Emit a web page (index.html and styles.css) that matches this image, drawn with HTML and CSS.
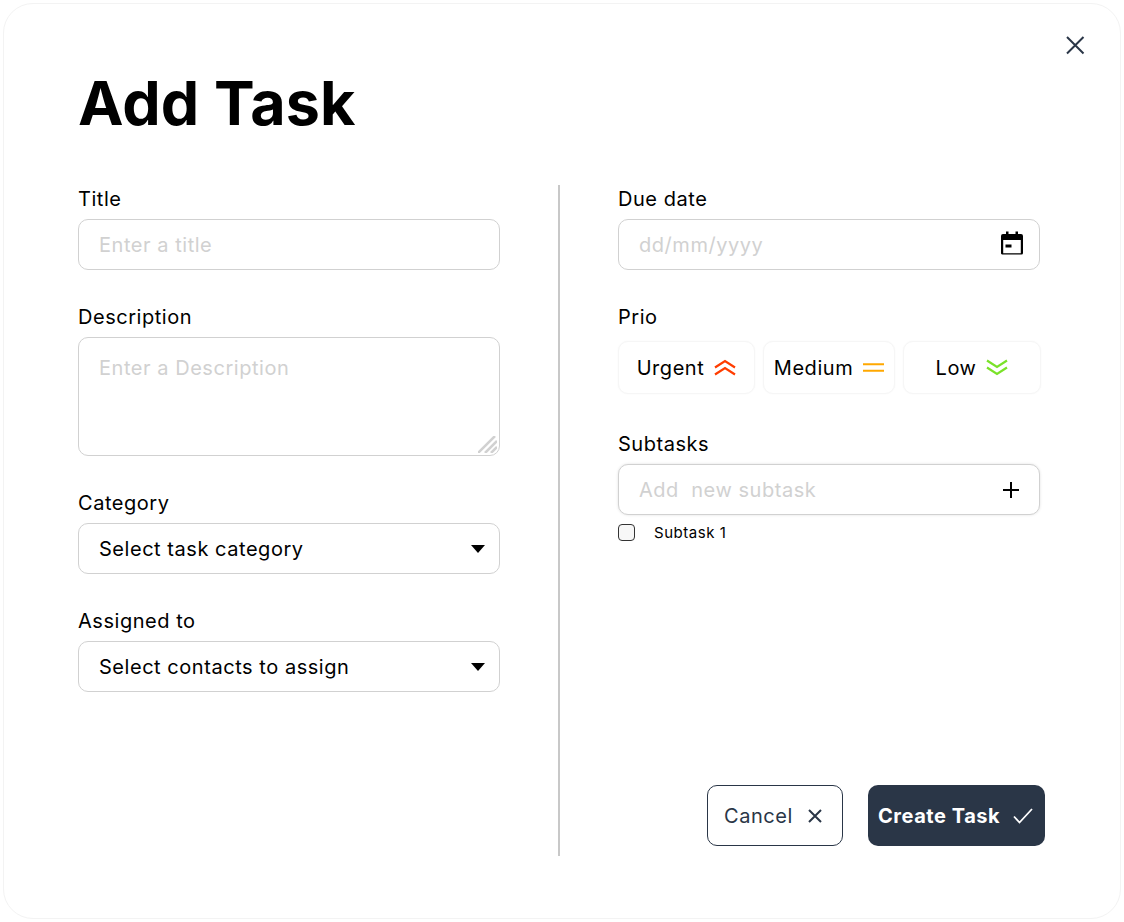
FILE: index.html
```html
<!DOCTYPE html>
<html lang="en">
<head>
    <meta charset="UTF-8">
    <meta name="viewport" content="width=device-width, initial-scale=1.0">
    <title>Add Task</title>
    <link rel="stylesheet" href="styles.css">
</head>
<body>
    <div class="modal">
        <button type="button" class="fechar" aria-label="Close">
            <svg width="24" height="24" viewBox="0 0 24 24"><path d="M4 4 L20.500 20.500 M20.500 4 L4 20.500" fill="none" stroke="#2a3647" stroke-width="2"/></svg>
        </button>

        <h1>Add Task</h1>

        <form class="form-task">
            <div class="coluna">
                <div class="campo">
                    <label for="title">Title</label>
                    <input type="text" id="title" placeholder="Enter a title">
                </div>
                <div class="campo">
                    <label for="description">Description</label>
                    <div class="caixa-texto">
                        <textarea id="description" placeholder="Enter a Description"></textarea>
                        <svg class="grip" width="19" height="17" viewBox="0 0 19 17"><path d="M0 17 L17 0 M7 17 L19 5 M13 17 L19 11" fill="none" stroke="#d1d1d1" stroke-width="2.500"/></svg>
                    </div>
                </div>
                <div class="campo">
                    <label for="category">Category</label>
                    <select id="category"><option>Select task category</option></select>
                </div>
                <div class="campo">
                    <label for="assigned">Assigned to</label>
                    <select id="assigned"><option>Select contacts to assign</option></select>
                </div>
            </div>

            <div class="divisor"></div>

            <div class="coluna">
                <div class="campo">
                    <label for="due">Due date</label>
                    <div class="com-icone">
                        <input type="text" id="due" placeholder="dd/mm/yyyy">
                        <svg class="icone-campo" width="24" height="24" viewBox="0 0 24 24"><path d="M6 0.500h2.500v2.500h7V0.500H18v2.500h3a2 2 0 0 1 2 2v17a1.500 1.500 0 0 1-1.500 1.500h-19A1.500 1.500 0 0 1 1 22.500V5a2 2 0 0 1 2-2h3z M3.200 9v13.300h17.600V9z M5.500 13.500h6v3h-6z" fill="#000" fill-rule="evenodd"/></svg>
                    </div>
                </div>
                <div class="campo">
                    <span class="rotulo">Prio</span>
                    <div class="prioridades">
                        <button type="button" class="prio">Urgent
                            <svg width="22" height="17" viewBox="0 0 22 17"><path d="M1 8.500 L11 2 L21 8.500 M1 15.500 L11 9 L21 15.500" fill="none" stroke="#ff3d00" stroke-width="2.200"/></svg>
                        </button>
                        <button type="button" class="prio">Medium
                            <svg width="21" height="9" viewBox="0 0 21 9"><path d="M0 1.200 H21 M0 7.800 H21" fill="none" stroke="#ffa800" stroke-width="2"/></svg>
                        </button>
                        <button type="button" class="prio">Low
                            <svg width="22" height="17" viewBox="0 0 22 17"><path d="M1 1.500 L11 8 L21 1.500 M1 8.500 L11 15 L21 8.500" fill="none" stroke="#7ae229" stroke-width="2.200"/></svg>
                        </button>
                    </div>
                </div>
                <div class="campo">
                    <label for="subtask">Subtasks</label>
                    <div class="com-icone">
                        <input type="text" id="subtask" class="sombra" placeholder="Add  new subtask">
                        <svg class="icone-campo mais" width="18" height="18" viewBox="0 0 18 18"><path d="M9 1 V17 M1 9 H17" fill="none" stroke="#000" stroke-width="2"/></svg>
                    </div>
                    <label class="subtarefa"><input type="checkbox"> Subtask 1</label>
                </div>

                <div class="acoes">
                    <button type="button" class="btn btn-cancelar">Cancel
                        <svg width="14" height="14" viewBox="0 0 14 14"><path d="M1 1 L13 13 M13 1 L1 13" fill="none" stroke="#2a3647" stroke-width="2"/></svg>
                    </button>
                    <button type="submit" class="btn btn-criar">Create Task
                        <svg width="20" height="16" viewBox="0 0 20 16"><path d="M1 8.500 L6.500 14.500 L19 1" fill="none" stroke="#fff" stroke-width="1.800"/></svg>
                    </button>
                </div>
            </div>
        </form>
    </div>
</body>
</html>
```

FILE: styles.css
```css
:root {
    --fonte: 'Inter', sans-serif;
    --espaco-letra: 0.54px;
    --cor-escura: #2a3647;
    --cor-borda: #d1d1d1;
    --cor-placeholder: #d1d1d1;
}

* {
    box-sizing: border-box;
}

body {
    margin: 0;
    padding: 3px;
    background-color: #ffffff;
    font-family: var(--fonte);
    letter-spacing: var(--espaco-letra);
    color: #000000;
}

.modal {
    position: relative;
    width: 1118px;
    height: 916px;
    padding: 0 74px;
    background: #ffffff;
    border: 1px solid #f3f3f3;
    border-radius: 30px;
}

.fechar {
    position: absolute;
    top: 29px;
    right: 33px;
    padding: 0;
    border: none;
    background: none;
    display: flex;
    cursor: pointer;
}

h1 {
    margin: 0;
    padding-top: 62px;
    height: 181px;
    font-size: 61px;
    line-height: 74px;
    font-weight: 700;
    letter-spacing: 0.1px;
}

.form-task {
    display: flex;
    height: 671px;
}

.coluna {
    width: 422px;
    display: flex;
    flex-direction: column;
    padding-top: 2px;
}

.divisor {
    width: 2px;
    margin: 0 58px;
    background-color: #c8c8c8;
}

.campo {
    margin-bottom: 35px;
}

.campo label,
.rotulo {
    display: block;
    margin-bottom: 8px;
    font-size: 20px;
    line-height: 24px;
}

input[type="text"],
textarea,
select {
    display: block;
    width: 100%;
    height: 51px;
    padding: 0 20px;
    border: 1px solid var(--cor-borda);
    border-radius: 10px;
    background-color: #ffffff;
    font-family: var(--fonte);
    letter-spacing: var(--espaco-letra);
    font-size: 20px;
    color: #000000;
    outline: none;
}

input::placeholder,
textarea::placeholder {
    color: var(--cor-placeholder);
    opacity: 1;
}

.caixa-texto {
    position: relative;
}

textarea {
    height: 119px;
    padding-top: 18px;
    line-height: 24px;
    resize: none;
}

.grip {
    position: absolute;
    right: 3px;
    bottom: 3px;
}

select {
    appearance: none;
    background-image: url("data:image/svg+xml,%3Csvg xmlns='http://www.w3.org/2000/svg' width='14' height='8'%3E%3Cpath d='M0 0H14L7 8z' fill='%23000'/%3E%3C/svg%3E");
    background-repeat: no-repeat;
    background-position: right 14px center;
}

.com-icone {
    position: relative;
}

.icone-campo {
    position: absolute;
    top: 12px;
    right: 16px;
}

.icone-campo.mais {
    top: 17px;
    right: 20px;
}

.sombra {
    box-shadow: 0 0 3px rgba(0, 0, 0, 0.12);
}

.prioridades {
    display: grid;
    grid-template-columns: 137px 132px 138px;
    gap: 8px;
    margin: 12px 0 3px;
}

.campo .rotulo {
    margin-bottom: 0;
}

.prio {
    height: 53px;
    padding: 0;
    display: flex;
    align-items: center;
    justify-content: center;
    gap: 10px;
    border: 1px solid #f6f6f6;
    border-radius: 10px;
    background-color: #ffffff;
    box-shadow: 0 0 2px rgba(0, 0, 0, 0.04);
    font-family: var(--fonte);
    letter-spacing: var(--espaco-letra);
    font-size: 20px;
    color: #000000;
    cursor: pointer;
}

.campo .subtarefa {
    display: flex;
    align-items: center;
    gap: 19px;
    margin: 9px 0 0;
    font-size: 15px;
    line-height: 16px;
}

.subtarefa input {
    appearance: none;
    width: 17px;
    height: 17px;
    margin: 0;
    border: 1.500px solid #333333;
    border-radius: 4px;
    background-color: #f7f7f7;
}

.acoes {
    margin-top: auto;
    margin-right: -5px;
    margin-bottom: 10px;
    display: flex;
    justify-content: flex-end;
    gap: 25px;
}

.btn {
    height: 61px;
    display: flex;
    align-items: center;
    border-radius: 10px;
    font-family: var(--fonte);
    letter-spacing: var(--espaco-letra);
    font-size: 20px;
    cursor: pointer;
}

.btn-cancelar {
    width: 136px;
    padding: 0 0 0 16px;
    gap: 15px;
    border: 1px solid var(--cor-escura);
    background-color: #ffffff;
    color: var(--cor-escura);
}

.btn-criar {
    width: 177px;
    padding: 0 0 0 10px;
    gap: 13px;
    border: none;
    background-color: var(--cor-escura);
    color: #ffffff;
    font-weight: 700;
}
```
